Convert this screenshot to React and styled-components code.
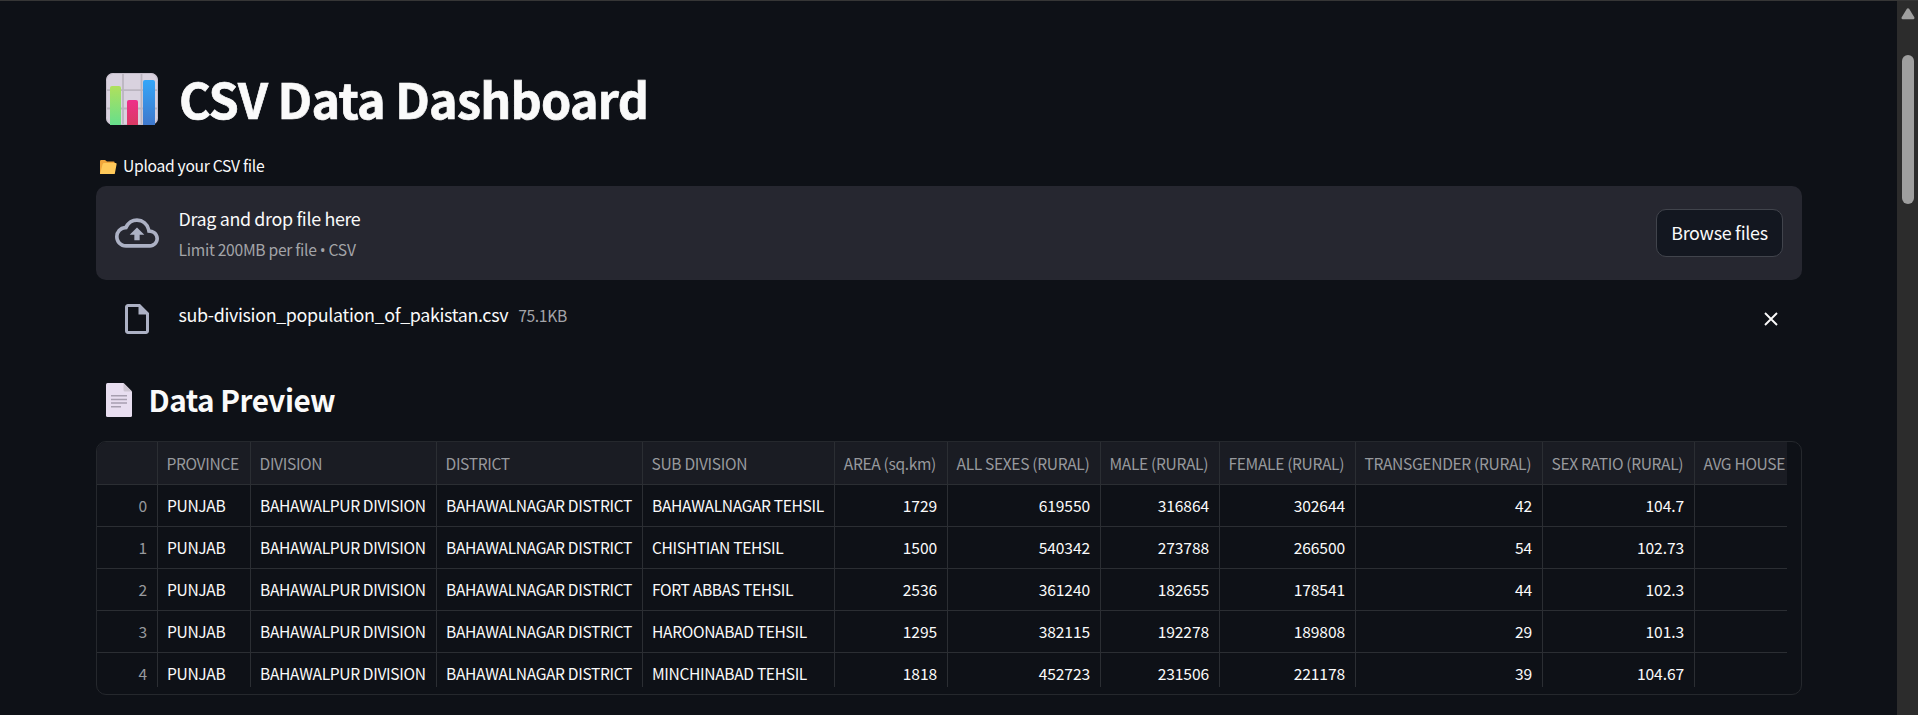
import React from "react";
import styled, { createGlobalStyle } from "styled-components";

const GlobalStyle = createGlobalStyle`
  *, *::before, *::after { box-sizing: border-box; }
  html, body { margin: 0; height: 100%; overflow: hidden; background: #0e1117; }
  body {
    color: #fafafa;
    font-family: "Noto Sans CJK SC", "Open Sans", sans-serif;
    font-size: 17.9px;
    letter-spacing: -0.35px;
  }
`;

const Page = styled.div`
  display: flex;
  width: 100%;
  height: 715px;
  border-top: 1px solid #363636;
  background: #0e1117;
  overflow: hidden;
`;

const Main = styled.main`
  flex: 1;
  min-width: 0;
  padding: 63px 95px 0 96px;
`;

const ScrollTrack = styled.aside`
  display: flex;
  flex-direction: column;
  align-items: center;
  width: 21px;
  padding-top: 6px;
  background: #2c2c2c;
`;

const ScrollThumb = styled.div`
  width: 12px;
  height: 149px;
  margin-top: 35px;
  border-radius: 6px;
  background: #9f9f9f;
`;

const Title = styled.h1`
  display: flex;
  align-items: center;
  gap: 21px;
  height: 66px;
  margin: 0;
  padding-left: 10px;
  font-size: 48.5px;
  font-weight: 700;
  letter-spacing: -0.75px;
  line-height: 66px;
  white-space: nowrap;
  -webkit-text-stroke: 0.7px #fafafa;
  svg { margin-top: 4px; }
  span { margin-top: 2px; }
`;

const UploadLabel = styled.label`
  display: flex;
  align-items: center;
  gap: 6px;
  height: 22px;
  margin-top: 25px;
  padding-left: 4px;
  font-size: 15.67px;
  letter-spacing: -0.3px;
  line-height: 22px;
  svg { margin-top: 2px; }
`;

const Dropzone = styled.section`
  display: flex;
  align-items: center;
  height: 94px;
  margin-top: 9px;
  padding: 0 19px;
  border-radius: 10px;
  background: #262730;
`;

const DropText = styled.div`
  flex: 1;
  margin-left: 19.5px;
  padding-top: 4px;
`;

const DropTitle = styled.div`
  line-height: 29px;
`;

const DropHint = styled.div`
  color: #a3a4a8;
  font-size: 15.67px;
  letter-spacing: -0.3px;
  line-height: 33px;
`;

const Bullet = styled.span`
  font-family: "Open Sans", sans-serif;
`;

const BrowseButton = styled.button`
  width: 127px;
  height: 48px;
  padding: 0 0 3px;
  border: 1px solid #41444c;
  border-radius: 10px;
  background: #131720;
  color: #fafafa;
  font: inherit;
  letter-spacing: -0.28px;
  white-space: nowrap;
`;

const FileRow = styled.div`
  display: flex;
  align-items: center;
  height: 34px;
  margin-top: 22px;
  padding: 0 24px 0 29px;
`;

const FileInfo = styled.div`
  display: flex;
  flex: 1;
  align-items: baseline;
  gap: 10px;
  height: 34px;
  margin-left: 29.5px;
  line-height: 25px;
`;

const FileSize = styled.span`
  color: #a3a4a8;
  font-size: 15.67px;
`;

const SectionHeading = styled.h3`
  display: flex;
  align-items: center;
  gap: 16.5px;
  height: 40px;
  margin: 42px 0 0;
  padding-left: 10px;
  font-size: 29.7px;
  font-weight: 600;
  letter-spacing: -0.5px;
  line-height: 40px;
  svg { margin-top: 4px; }
  span { margin-top: 4px; }
`;

const TableFrame = styled.div`
  height: 254px;
  margin-top: 23px;
  padding-right: 14px;
  border: 1px solid #25282d;
  border-radius: 10px;
  overflow: hidden;
`;

const TableViewport = styled.div`
  height: 245px;
  overflow: hidden;
`;

const Row = styled.div`
  display: grid;
  grid-template-columns: 61px 93px 186px 206px 192px 113px 153px 119px 136px 187px 152px 93px;
  height: ${(p) => (p.$header ? 43 : 42)}px;
  background: ${(p) => (p.$header ? "#1a1c23" : "transparent")};
`;

const Cell = styled.div`
  padding: ${(p) => (p.$header ? "1px 11px 0 8.5px" : "0 10px 1px 9px")};
  border-right: 1px solid #2b2e33;
  border-bottom: 1px solid #2b2e33;
  color: ${(p) => (p.$muted ? "#97999d" : "#fafafa")};
  font-size: 15.6px;
  letter-spacing: ${(p) => (p.$right && !p.$header ? "-0.1px" : "-0.35px")};
  line-height: 40px;
  text-align: ${(p) => (p.$right ? "right" : "left")};
  white-space: nowrap;
  overflow: hidden;
  &:last-child { border-right: 0; padding-right: 0; }
`;

const ChartIcon = () => (
  <svg width="52" height="52" viewBox="0 0 52 52">
    <defs>
      <linearGradient id="green" x1="0" y1="0" x2="0" y2="1">
        <stop offset="0" stopColor="#b0e05c" />
        <stop offset="1" stopColor="#66df8c" />
      </linearGradient>
      <linearGradient id="pink" x1="0" y1="0" x2="0" y2="1">
        <stop offset="0" stopColor="#ee2f8a" />
        <stop offset="1" stopColor="#d93a63" />
      </linearGradient>
      <linearGradient id="blue" x1="0" y1="0" x2="0" y2="1">
        <stop offset="0" stopColor="#35a6f8" />
        <stop offset="1" stopColor="#3f78cc" />
      </linearGradient>
      <clipPath id="board"><rect width="52" height="52" rx="7" /></clipPath>
    </defs>
    <g clipPath="url(#board)">
      <rect width="52" height="52" fill="#d9d2df" />
      <path d="M17 0V52M35.5 0V52M0 17.2H52M0 35.5H52" stroke="#bbb5c0" strokeWidth="1.8" />
      <rect x="0.5" y="0.5" width="51" height="51" rx="7" fill="none" stroke="#c4bdca" />
    </g>
    <path d="M4 52V15a2 2 0 0 1 2-2h7a2 2 0 0 1 2 2V52Z" fill="url(#green)" />
    <path d="M21 52V29a2 2 0 0 1 2-2h7a2 2 0 0 1 2 2V52Z" fill="url(#pink)" />
    <path d="M37 52V9a2 2 0 0 1 2-2h8a2 2 0 0 1 2 2V52Z" fill="url(#blue)" />
  </svg>
);

const FolderIcon = () => (
  <svg width="17" height="14" viewBox="0 0 17 14">
    <path d="M0 1.2Q0 0 1.2 0H5l2 1.5h6.5q1.2 0 1.2 1.2V14H0Z" fill="#f0a63c" />
    <path d="M2.6 4.2Q3 3 4.2 3H15.6q1.2 0 1 1.2L15 12.8q-.2 1.2-1.4 1.2H0Z" fill="#ffc95a" />
  </svg>
);

const CloudIcon = () => (
  <svg width="44" height="44" viewBox="0 0 24 24" fill="#acb1c4">
    <path d="M19.35 10.04A7.49 7.49 0 0 0 12 4C9.11 4 6.6 5.64 5.35 8.04A5.994 5.994 0 0 0 0 14c0 3.31 2.69 6 6 6h13c2.76 0 5-2.24 5-5 0-2.64-2.05-4.78-4.65-4.96zM19 18H6c-2.21 0-4-1.79-4-4 0-2.05 1.53-3.76 3.56-3.97l1.07-.11.5-.95A5.469 5.469 0 0 1 12 6c2.62 0 4.88 1.86 5.39 4.43l.3 1.5 1.53.11A2.98 2.98 0 0 1 22 15c0 1.65-1.35 3-3 3zM8 13h2.55v3h2.9v-3H16l-4-4z" />
  </svg>
);

const FileIcon = () => (
  <svg width="24" height="30" viewBox="4 2 16 20" fill="#acb1c4">
    <path d="M6 2c-1.1 0-1.99.9-1.99 2L4 20c0 1.1.89 2 1.99 2H18c1.1 0 2-.9 2-2V8l-6-6H6zm0 18V4h7v5h5v11H6z" />
  </svg>
);

const PageIcon = () => (
  <svg width="26" height="34" viewBox="0 0 26 34">
    <path d="M1.5 0H17.5L26 8.5V32.5Q26 34 24.5 34H1.5Q0 34 0 32.5V1.5Q0 0 1.5 0Z" fill="#e8def0" />
    <path d="M17.5 0L26 8.5H19q-1.5 0-1.5-1.5Z" fill="#cdc5d2" />
    <path d="M5 12.7H21M5 16.5H21M5 20H21M5 23.7H15" stroke="#a79fb0" strokeWidth="1.4" />
  </svg>
);

const CloseIcon = () => (
  <svg width="14" height="14" viewBox="0 0 14 14">
    <path d="M1 1L13 13M13 1L1 13" stroke="#fafafa" strokeWidth="1.9" />
  </svg>
);

const ArrowUp = () => (
  <svg width="14" height="13" viewBox="0 0 14 13">
    <path d="M7 2.5L12.2 11H1.8Z" fill="#9f9f9f" stroke="#9f9f9f" strokeWidth="2.6" strokeLinejoin="round" />
  </svg>
);

const COLUMNS = [
  "", "PROVINCE", "DIVISION", "DISTRICT", "SUB DIVISION", "AREA (sq.km)", "ALL SEXES (RURAL)",
  "MALE (RURAL)", "FEMALE (RURAL)", "TRANSGENDER (RURAL)", "SEX RATIO (RURAL)", "AVG HOUSE",
];

const ROWS = [
  ["BAHAWALNAGAR TEHSIL", "1729", "619550", "316864", "302644", "42", "104.7"],
  ["CHISHTIAN TEHSIL", "1500", "540342", "273788", "266500", "54", "102.73"],
  ["FORT ABBAS TEHSIL", "2536", "361240", "182655", "178541", "44", "102.3"],
  ["HAROONABAD TEHSIL", "1295", "382115", "192278", "189808", "29", "101.3"],
  ["MINCHINABAD TEHSIL", "1818", "452723", "231506", "221178", "39", "104.67"],
].map((r, i) => [String(i), "PUNJAB", "BAHAWALPUR DIVISION", "BAHAWALNAGAR DISTRICT", ...r, ""]);

const isNumeric = (col) => col === 0 || (col > 4 && col < 11);

export default function App() {
  return (
    <>
      <GlobalStyle />
      <Page>
        <Main>
          <Title><ChartIcon /><span>CSV Data Dashboard</span></Title>
          <UploadLabel><FolderIcon />Upload your CSV file</UploadLabel>
          <Dropzone>
            <CloudIcon />
            <DropText>
              <DropTitle>Drag and drop file here</DropTitle>
              <DropHint>Limit 200MB per file <Bullet>•</Bullet> CSV</DropHint>
            </DropText>
            <BrowseButton>Browse files</BrowseButton>
          </Dropzone>
          <FileRow>
            <FileIcon />
            <FileInfo>
              <span>sub-division_population_of_pakistan.csv</span>
              <FileSize>75.1KB</FileSize>
            </FileInfo>
            <CloseIcon />
          </FileRow>
          <SectionHeading><PageIcon /><span>Data Preview</span></SectionHeading>
          <TableFrame>
            <TableViewport>
              <Row $header>
                {COLUMNS.map((c, i) => (
                  <Cell key={i} $header $muted $right={isNumeric(i)}>{c}</Cell>
                ))}
              </Row>
              {ROWS.map((row) => (
                <Row key={row[0]}>
                  {row.map((v, i) => (
                    <Cell key={i} $muted={i === 0} $right={isNumeric(i)}>{v}</Cell>
                  ))}
                </Row>
              ))}
            </TableViewport>
          </TableFrame>
        </Main>
        <ScrollTrack>
          <ArrowUp />
          <ScrollThumb />
        </ScrollTrack>
      </Page>
    </>
  );
}
